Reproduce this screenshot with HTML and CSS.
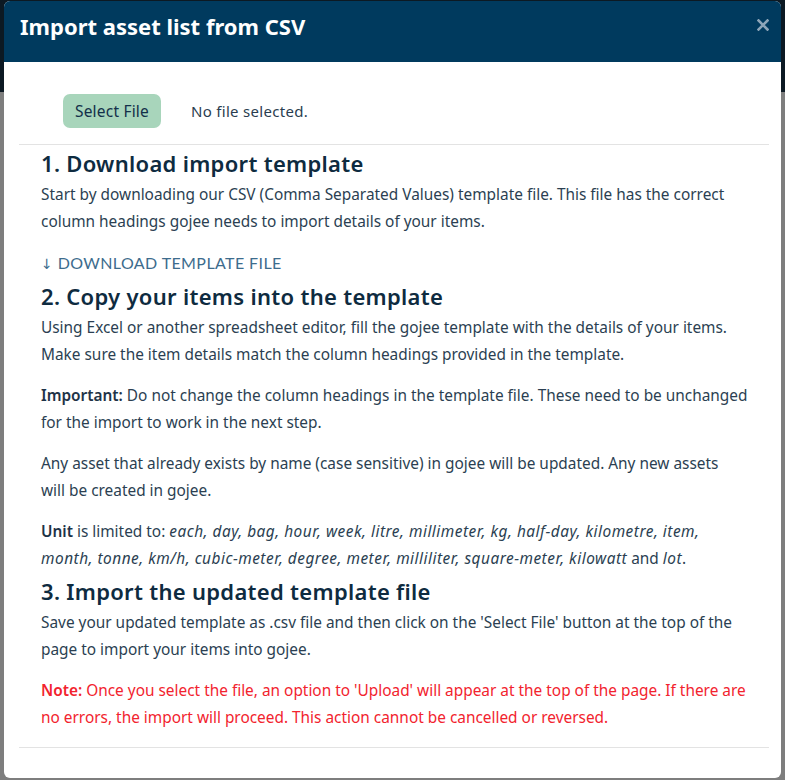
FILE: index.html
```html
<!DOCTYPE html>
<html lang="en">
<head>
<meta charset="utf-8">
<title>Import asset list from CSV</title>
<link rel="stylesheet" href="styles.css">
</head>
<body>
<div class="modal">
  <div class="modal-header">
    <h2 class="modal-title">Import asset list from CSV</h2>
    <button class="close" aria-label="Close">
      <svg width="12" height="12" viewBox="0 0 12 12"><path d="M1.5 1.5 L10.5 10.5 M10.5 1.5 L1.5 10.5" stroke="currentColor" stroke-width="2.6" stroke-linecap="square"/></svg>
    </button>
  </div>
  <div class="modal-body">
    <div class="upload-row">
      <button class="btn-select">Select File</button>
      <span class="file-status">No file selected.</span>
    </div>
    <hr class="divider">
    <div class="content">
      <section class="step">
        <h4 class="step-title">1. Download import template</h4>
        <p>Start by downloading our CSV (Comma Separated Values) template file. This file has the correct column headings gojee needs to import details of your items.</p>
        <a class="download-link" href="#"><span class="arrow">↓</span> DOWNLOAD TEMPLATE FILE</a>
      </section>
      <section class="step">
        <h4 class="step-title">2. Copy your items into the template</h4>
        <p>Using Excel or another spreadsheet editor, fill the gojee template with the details of your items. Make sure the item details match the column headings provided in the template.</p>
        <p><strong>Important:</strong> Do not change the column headings in the template file. These need to be unchanged for the import to work in the next step.</p>
        <p>Any asset that already exists by name (case sensitive) in gojee will be updated. Any new assets<br>will be created in gojee.</p>
        <p class="last"><strong>Unit</strong> is limited to: <em>each, day, bag, hour, week, litre, millimeter, kg, half-day, kilometre, item, month, tonne, km/h, cubic-meter, degree, meter, milliliter, square-meter, kilowatt</em> and <em>lot</em>.</p>
      </section>
      <section class="step">
        <h4 class="step-title">3. Import the updated template file</h4>
        <p>Save your updated template as .csv file and then click on the 'Select File' button at the top of the page to import your items into gojee.</p>
        <p class="note"><strong>Note:</strong> Once you select the file, an option to 'Upload' will appear at the top of the page. If there are no errors, the import will proceed. This action cannot be cancelled or reversed.</p>
      </section>
    </div>
    <hr class="divider bottom">
  </div>
</div>
</body>
</html>
```
FILE: styles.css
```css
* { box-sizing: border-box; }
html, body { height: 100%; }
body {
  margin: 0;
  background: linear-gradient(to bottom, #0c1923 0, #0c1923 92px, #7e7e7e 92px, #7e7e7e 100%);
  font-family: "Noto Sans", "Open Sans", sans-serif;
  overflow: hidden;
}
.modal {
  margin: 1px 4px 0 4px;
  width: 777px;
  height: 777px;
  background: #fff;
  border-radius: 6px;
  overflow: hidden;
}
.modal-header {
  height: 61px;
  background: #003a5e;
  display: flex;
  align-items: center;
  justify-content: space-between;
  padding: 0 12px 0 16px;
}
.modal-title {
  margin: 0;
  color: #fff;
  font-size: 22px;
  font-weight: 700;
  line-height: 30px;
  padding-bottom: 11px;
}
.close {
  background: none;
  border: 0;
  padding: 0;
  margin-top: -14px;
  color: #8ea5b8;
  display: flex;
}
.modal-body {
  padding: 0 12px 0 15px;
}
.upload-row {
  display: flex;
  align-items: center;
  padding: 32px 0 0 44px;
  gap: 30px;
}
.btn-select {
  background: #a8d5bb;
  border: 0;
  border-radius: 7px;
  height: 34px;
  width: 98px;
  font-family: inherit;
  font-size: 15.5px;
  color: #13304a;
  padding: 0;
  letter-spacing: 0.2px;
}
.file-status {
  font-size: 15px;
  color: #2a3d50;
  letter-spacing: 0.3px;
}
.divider {
  border: 0;
  border-top: 1px solid #e3e3e3;
  margin: 16px 0 0 0;
}
.divider.bottom { margin-top: 16px; }
.content {
  padding: 3px 20px 0 22px;
}
.step-title {
  margin: 0 0 3px 0;
  font-size: 22px;
  font-weight: 600;
  line-height: 30px;
  color: #0e2b40;
  letter-spacing: 0.3px;
}
.step p {
  margin: 0 0 14px 0;
  font-size: 15.4px;
  line-height: 27px;
  color: #2b3f52;
}
.step p.last { margin-bottom: 4px; }
.step strong { font-weight: 600; color: #1e3347; }
.step em { font-style: italic; letter-spacing: 0.5px; }
.download-link {
  display: block;
  font-family: "Lato", sans-serif;
  font-size: 16px;
  line-height: 27px;
  color: #3d6c8d;
  text-decoration: none;
  margin-bottom: 3px;
  letter-spacing: 0.4px;
}
.arrow { font-family: "DejaVu Sans", sans-serif; font-size: 14px; }
.step p.note { color: #f2232e; margin-bottom: 0; }
.step p.note strong { color: #f2232e; }
```
